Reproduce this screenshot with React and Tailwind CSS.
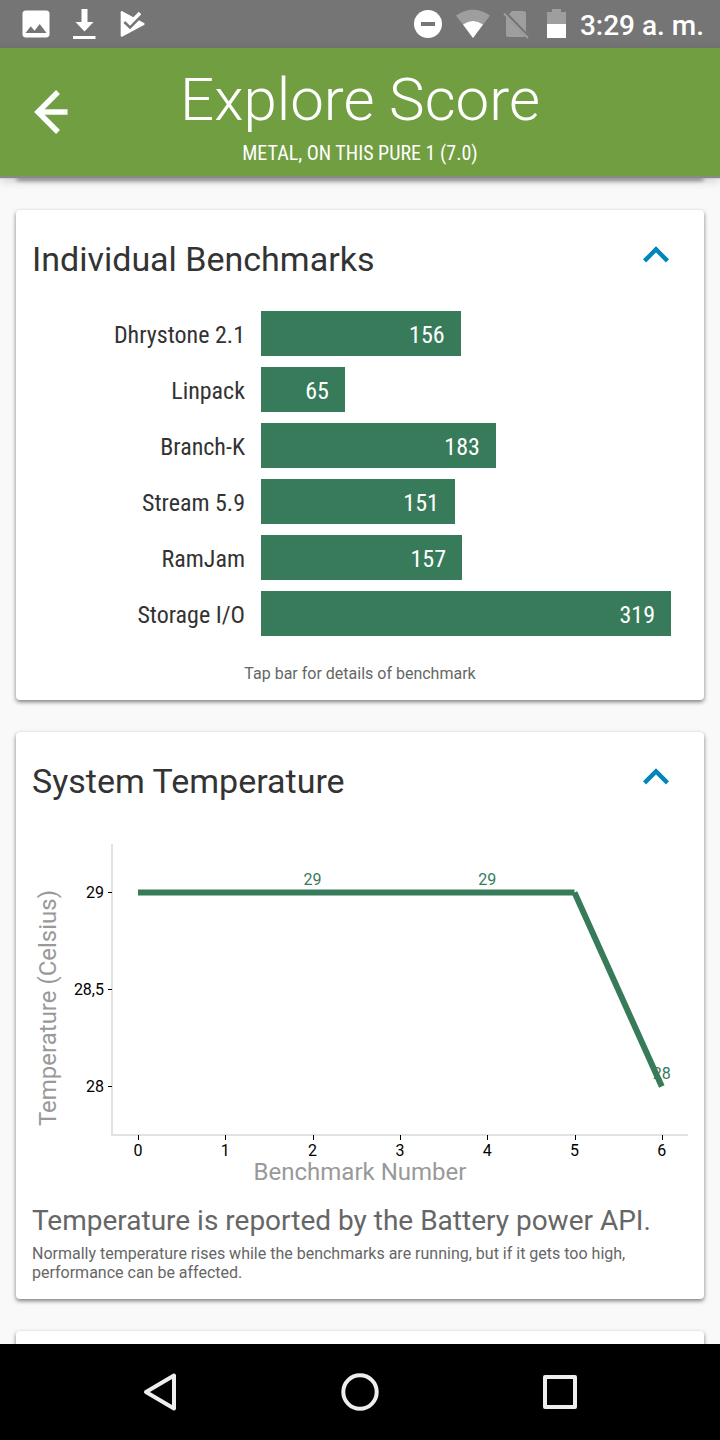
import { MdExpandLess, MdImage } from "react-icons/md";

// Scores are kept unrounded: bars use the exact value, labels the rounded one.
const benchmarks = [
  { id: "dhrystone", name: "Dhrystone 2.1", score: 155.5 },
  { id: "linpack", name: "Linpack", score: 65.4 },
  { id: "branch-k", name: "Branch-K", score: 183 },
  { id: "stream", name: "Stream 5.9", score: 151 },
  { id: "ramjam", name: "RamJam", score: 156.6 },
  { id: "storage", name: "Storage I/O", score: 319.4 },
];

const maxScore = Math.max(...benchmarks.map((b) => b.score));

function StatusBar() {
  return (
    <div className="flex h-12 shrink-0 items-center justify-between bg-[#757575] pr-4 pl-[18px] text-white">
      <div className="flex items-center gap-3.5">
        <MdImage className="size-9" aria-hidden="true" />
        <svg viewBox="0 0 32 32" className="size-8" fill="currentColor" aria-hidden="true">
          <path d="M13.5 1h6v13h6l-9 9.500-9-9.500h6zM5 28h22.500v3H5z" />
        </svg>
        <svg viewBox="0 0 32 32" className="ml-0.5 size-8" aria-hidden="true">
          <path
            d="M4.700 4.200Q5 2.800 6.300 3.200L28 15Q29.500 16 28 17L6.500 28.600Q5 29.200 4.700 28z"
            fill="currentColor"
          />
          <path d="M8.700 13.800l5.300 5L26 6.800" stroke="#757575" strokeWidth="3.600" fill="none" />
          <path d="M9.700 11l4.300 4.300L24 5" stroke="currentColor" strokeWidth="3.600" fill="none" />
        </svg>
      </div>
      <div className="flex items-center gap-2">
        <svg viewBox="0 0 32 32" className="size-8" aria-hidden="true">
          <circle cx="16" cy="16" r="14" fill="currentColor" />
          <rect x="9" y="14" width="14" height="4" fill="#757575" />
        </svg>
        <svg viewBox="0 0 40 32" className="h-8 w-10" fill="currentColor" aria-hidden="true">
          <path d="M21 30L4 7.500Q21-4 38 7.500z" opacity=".3" />
          <path d="M21 30L11 16.500Q21 9.500 31 16.500z" />
        </svg>
        <svg viewBox="0 0 32 32" className="size-8" aria-hidden="true">
          <path
            d="M12 3h11.500q2.500 0 2.500 2.500V24.500L9 6.500zM6 8.500L25 28.500q-.500.500-1.500.500H8.500Q6 29 6 26.500z"
            fill="#9e9e9e"
          />
          <path d="M4 5.500l24 24.500" stroke="#9e9e9e" strokeWidth="2" />
          <path d="M9 7.500l17 17.500" stroke="#757575" strokeWidth="1.500" />
        </svg>
        <svg viewBox="0 0 32 32" className="size-8" aria-hidden="true">
          <path d="M7 4h5V1h9v3h5v12H7z" fill="#9e9e9e" />
          <path d="M7 16h19v14H7z" fill="currentColor" />
        </svg>
        <span className="pt-1 text-[28px] leading-8 font-medium whitespace-nowrap">3:29 a. m.</span>
      </div>
    </div>
  );
}

function Header() {
  return (
    <header className="relative z-10 grid h-32 shrink-0 grid-cols-[100px_1fr_100px] bg-[#709e40] text-white shadow-[0_2px_1px_#8a8a8a,0_4px_10px_rgba(0,0,0,0.2)]">
      <button type="button" aria-label="Back" className="flex items-center justify-center">
        <svg viewBox="0 0 48 48" className="size-12" fill="none" stroke="currentColor" strokeWidth="5.500">
          <path d="M32 4L12 24 32 44M12 24h29.500" />
        </svg>
      </button>
      <div className="flex flex-col items-center pt-4 text-center whitespace-nowrap">
        <h1 className="text-[60px] leading-[72px] font-light">Explore Score</h1>
        <p className="font-['Roboto_Condensed','Roboto',sans-serif] text-[20px] leading-[34px]">
          METAL, ON THIS PURE 1 (7.0)
        </p>
      </div>
    </header>
  );
}

function Card({ title, children }) {
  return (
    <section className="rounded bg-white px-4 shadow-[0_2px_4px_rgba(0,0,0,0.5)]">
      <div className="flex h-[99px] items-center justify-between pb-0.5">
        <h2 className="text-[34px] leading-10 text-[#333333]">{title}</h2>
        <button type="button" aria-label={`Collapse ${title}`} className="mr-1.5 h-[60px] text-[#0086bb]">
          <MdExpandLess className="mb-2 size-[52px]" />
        </button>
      </div>
      {children}
    </section>
  );
}

function BenchmarkBars() {
  return (
    <ul className="flex flex-col gap-[11px] pt-0.5 pr-[17px] font-['Roboto_Condensed','Roboto',sans-serif] text-[24px] leading-8">
      {benchmarks.map(({ id, name, score }) => (
        <li key={id} className="flex h-[45px] items-center gap-4">
          <span id={id} className="w-[213px] shrink-0 pt-0.5 text-right text-[#333333]">
            {name}
          </span>
          <div className="h-full flex-1">
            <button
              type="button"
              aria-describedby={id}
              className="flex h-full items-center justify-end bg-[#377b5a] pt-0.5 pr-4 text-white"
              style={{ width: `${(score / maxScore) * 100}%` }}
            >
              {Math.round(score)}
            </button>
          </div>
        </li>
      ))}
    </ul>
  );
}

function TemperatureChart() {
  const xAt = (i) => 106 + i * 87.3;
  const yTicks = [
    { label: "29", y: 61 },
    { label: "28,5", y: 158 },
    { label: "28", y: 255 },
  ];
  const points = [
    { i: 2, label: "29", y: 54 },
    { i: 4, label: "29", y: 54 },
    { i: 6, label: "28", y: 248 },
  ];
  return (
    <svg viewBox="0 0 656 369" className="block h-auto w-full" role="img" aria-label="System temperature by benchmark number">
      <path d="M80 13V304H656" fill="none" stroke="#e2e2e2" strokeWidth="2" />
      {yTicks.map((t) => (
        <g key={t.label}>
          <path d={`M76 ${t.y + 0.5}h4`} stroke="#000" />
          <text x="72" y={t.y + 6} textAnchor="end" fontSize="16" fill="#000">
            {t.label}
          </text>
        </g>
      ))}
      {[0, 1, 2, 3, 4, 5, 6].map((i) => (
        <g key={i}>
          <path d={`M${Math.round(xAt(i)) + 0.5} 304v5`} stroke="#000" />
          <text x={xAt(i)} y="325" textAnchor="middle" fontSize="16" fill="#000">
            {i}
          </text>
        </g>
      ))}
      {points.map((p) => (
        <text key={p.i} x={xAt(p.i)} y={p.y} textAnchor="middle" fontSize="16" fill="#377b5a">
          {p.label}
        </text>
      ))}
      <path d={`M106 61.500H${xAt(5)}M${xAt(5)} 61.500L${xAt(6)} 255.500`} stroke="#377b5a" strokeWidth="6" />
      <text x="328" y="349" textAnchor="middle" fontSize="24" fill="#999999">
        Benchmark Number
      </text>
      <text transform="translate(24 177) rotate(-90)" textAnchor="middle" fontSize="24" fill="#999999">
        Temperature (Celsius)
      </text>
    </svg>
  );
}

function NavBar() {
  return (
    <nav className="grid h-24 shrink-0 grid-cols-3 bg-black px-[60px] text-[#eeeeee]">
      <button type="button" aria-label="Back" className="flex items-center justify-center">
        <svg viewBox="0 0 40 40" className="size-10" fill="none" stroke="currentColor" strokeWidth="4" strokeLinejoin="round">
          <path d="M34 3.500v33L6 20z" />
        </svg>
      </button>
      <button type="button" aria-label="Home" className="flex items-center justify-center">
        <svg viewBox="0 0 40 40" className="size-10" fill="none" stroke="currentColor" strokeWidth="4">
          <circle cx="20" cy="20" r="16.700" />
        </svg>
      </button>
      <button type="button" aria-label="Recent apps" className="flex items-center justify-center">
        <svg viewBox="0 0 40 40" className="size-10" fill="none" stroke="currentColor" strokeWidth="4" strokeLinejoin="round">
          <rect x="5" y="5" width="30" height="30" />
        </svg>
      </button>
    </nav>
  );
}

export default function App() {
  return (
    <div className="flex h-screen flex-col bg-[#f9f9f9] font-['Roboto',sans-serif]">
      <StatusBar />
      <Header />
      <main className="flex min-h-0 flex-1 flex-col overflow-y-auto px-4 [scrollbar-width:none]">
        <div className="flex flex-col gap-8">
          <div className="h-0.5 rounded-b bg-white shadow-[0_2px_4px_rgba(0,0,0,0.8)]" />
          <Card title="Individual Benchmarks">
            <BenchmarkBars />
            <p className="pt-6 pb-3 text-center text-[16px] leading-7 text-[#666666]">
              Tap bar for details of benchmark
            </p>
          </Card>
          <Card title="System Temperature">
            <TemperatureChart />
            <p className="text-[28px] leading-[42px] text-[#666666]">
              Temperature is reported by the Battery power API.
            </p>
            <p className="pt-0.5 pb-[17px] text-[16px] leading-[19px] text-[#666666]">
              Normally temperature rises while the benchmarks are running, but if it gets too high, performance can be
              affected.
            </p>
          </Card>
          <div className="h-24 rounded bg-white shadow-[0_2px_4px_rgba(0,0,0,0.5)]" />
        </div>
      </main>
      <NavBar />
    </div>
  );
}
